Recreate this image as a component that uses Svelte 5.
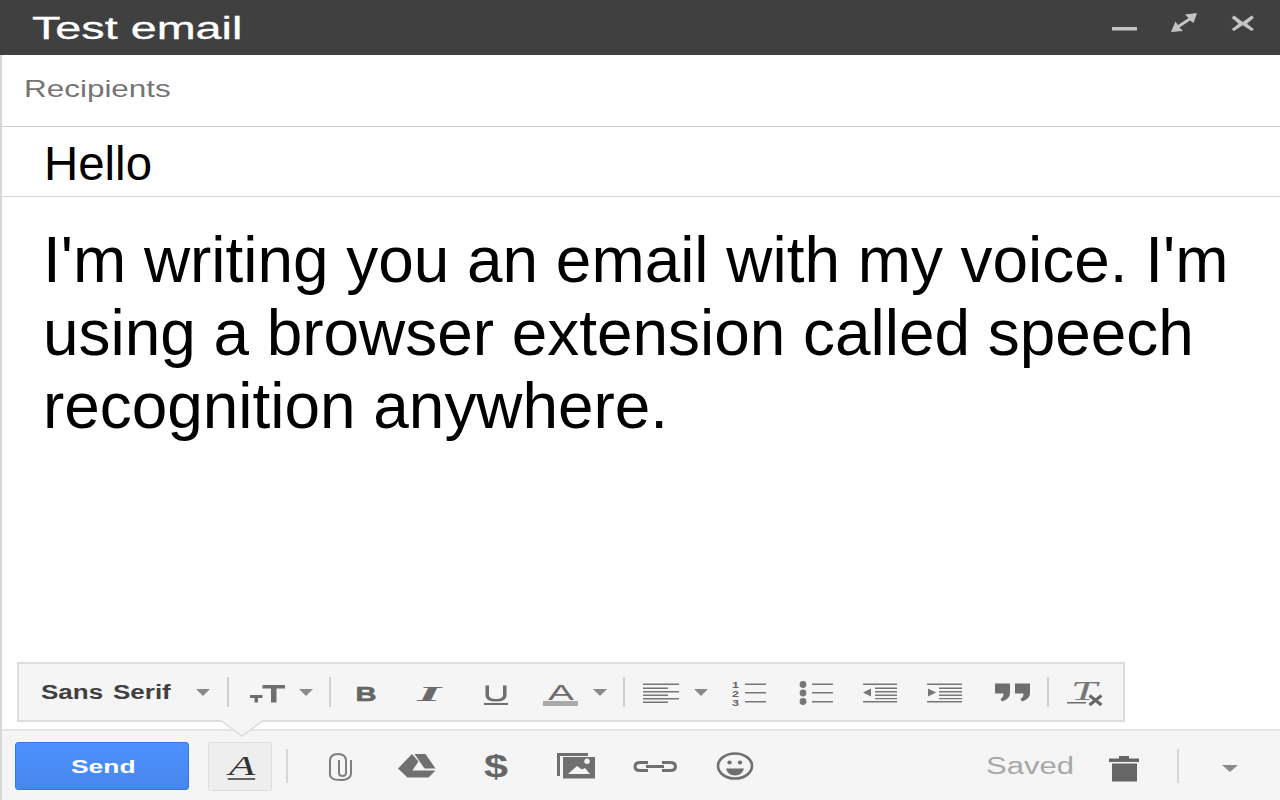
<script>
  let subject = 'Hello';
  let message = "I'm writing you an email with my voice. I'm using a browser extension called speech recognition anywhere.";
</script>

<div class="compose">
  <header class="titlebar">
    <span class="title">Test email</span>
    <div class="window-btns">
      <svg class="win-min" viewBox="1112 10 26 24"><rect x="1112" y="27" width="25" height="3.5" /></svg>
      <svg class="win-max" viewBox="1170 10 28 24">
        <path d="M1197 13L1185 14.500L1188.500 18L1178 25L1175.500 21.500L1171 32L1183 31L1179.500 27.500L1190 20.500L1193.500 23z" />
      </svg>
      <svg class="win-close" viewBox="1231 10 24 24">
        <path d="M1234 15.500l8.800 6.500 8.800-6.500 2.400 2.200-7 6 7 5.500-2.400 1.800-8.800-5.800-8.800 5.800-2.400-1.800 7-5.500-7-6z" />
      </svg>
    </div>
  </header>

  <div class="recipients"><span class="recipients-label">Recipients</span></div>
  <div class="subject">{subject}</div>
  <div class="message">{message}</div>

  <div class="format-bar">
    <span class="font-name">Sans Serif</span>
    <i class="arrow first"></i>
    <i class="sep sep-font"></i>
    <svg class="fi size" viewBox="251 680 32 24">
      <path d="M250 695h12.500v3h-4.500v4.500h-3.500v-4.500h-4.500z M262.500 685h22.500v3.500h-8.500v14h-5.500v-14h-8.500z" />
    </svg>
    <i class="arrow tight"></i>
    <i class="sep"></i>
    <svg class="fi bold" viewBox="350 680 32 24">
      <text class="t-bold heavy" x="355.500" y="701" font-size="21" textLength="21" lengthAdjust="spacingAndGlyphs">B</text>
    </svg>
    <svg class="fi italic" viewBox="414 680 32 24">
      <text class="t-italic" x="417" y="701" font-size="22" textLength="24" lengthAdjust="spacingAndGlyphs">I</text>
    </svg>
    <svg class="fi underline" viewBox="479 680 32 24">
      <path d="M484.500 685.500h3.500v9.500q0 4 7 4t7-4v-9.500h3.500v10q0 6-10.500 6t-10.500-6z" />
      <rect x="483" y="703" width="24" height="2" />
    </svg>
    <svg class="fi color" viewBox="544 680 32 24">
      <text class="t-reg" x="547" y="700" font-size="22" textLength="26" lengthAdjust="spacingAndGlyphs">A</text>
      <rect class="swatch" x="542" y="701" width="35" height="5" />
    </svg>
    <i class="arrow"></i>
    <i class="sep"></i>
    <svg class="fi align" viewBox="645 680 32 24">
      <path d="M643 683.500h36v1.500h-36z M643 687.500h25v1.500h-25z M643 691h36v1.500h-36z M643 694.500h25v1.500h-25z M643 698h36v1.500h-36z M643 701.500h25v1.500h-25z" />
    </svg>
    <i class="arrow"></i>
    <svg class="fi numbered" viewBox="732 680 32 24">
      <text class="t-bold" x="732" y="688" font-size="9" textLength="7" lengthAdjust="spacingAndGlyphs">1</text>
      <text class="t-bold" x="732" y="697" font-size="9" textLength="7" lengthAdjust="spacingAndGlyphs">2</text>
      <text class="t-bold" x="732" y="705.500" font-size="9" textLength="7" lengthAdjust="spacingAndGlyphs">3</text>
      <path d="M745 683.500h21v1.500h-21z M745 692h21v1.500h-21z M745 701h21v1.500h-21z" />
    </svg>
    <svg class="fi bullets" viewBox="800 680 32 24">
      <circle cx="803" cy="684.500" r="3.400" />
      <circle cx="803" cy="693" r="3.400" />
      <circle cx="803" cy="701.500" r="3.400" />
      <path d="M812 683.500h21v1.500h-21z M812 692h21v1.500h-21z M812 701h21v1.500h-21z" />
    </svg>
    <svg class="fi indent-less" viewBox="864 680 32 24">
      <path d="M863 683.500h34v1.500h-34z M863 701h34v1.500h-34z M875 687.500h22v1.500h-22z M875 691h22v1.500h-22z M875 694.500h22v1.500h-22z M875 698h22v1.200h-22z M871 688.500v8l-8-4z" />
    </svg>
    <svg class="fi indent-more" viewBox="928 680 32 24">
      <path d="M927 683.500h35v1.500h-35z M927 701h35v1.500h-35z M939 687.500h23v1.500h-23z M939 691h23v1.500h-23z M939 694.500h23v1.500h-23z M939 698h23v1.200h-23z M928 688.500v8l8-4z" />
    </svg>
    <svg class="fi quote" viewBox="996 680 32 24">
      <path d="M995 683.500h15v9.500q0 6-8 8.500l-1.500-2.500q3-1.500 3-5.500h-8.500z M1015 683.500h15v9.500q0 6-8 8.500l-1.500-2.500q3-1.500 3-5.500h-8.500z" />
    </svg>
    <i class="sep sep-clear"></i>
    <svg class="fi clear" viewBox="1069 680 32 24">
      <text class="t-serif" x="1072" y="700" font-size="28" textLength="26" lengthAdjust="spacingAndGlyphs">T</text>
      <rect x="1068" y="702" width="19" height="1.500" />
      <path class="x-mark" d="M1090.500 695.500l12 9.500 M1102.500 695.500l-12 9.500" />
    </svg>
    <svg class="notch" viewBox="0 0 46 18">
      <path d="M1 0l22 16 22-16z" />
      <path class="notch-line" d="M1 0l22 16 22-16" />
    </svg>
  </div>

  <div class="actions">
    <button class="send" type="button"><span>Send</span></button>
    <button class="text-format" type="button">
      <svg viewBox="208 742 63 48">
        <text class="t-serif-dark" x="228" y="775" font-size="28" textLength="27" lengthAdjust="spacingAndGlyphs">A</text>
        <rect class="dark" x="227" y="778" width="28" height="1.500" />
      </svg>
    </button>
    <i class="bar-sep first-sep"></i>

    <svg class="bi clip" viewBox="320 745 40 40">
      <path d="M351 759v13q0 7-11 7t-10-7v-12q0-7 8-7t8 7v12q0 3-3.500 3t-3.500-3v-13" />
    </svg>
    <svg class="bi drive" viewBox="396 745 40 40">
      <path d="M398 767.500l14-14.500 6.500 7.500-11 16z M414.500 753h11l10 14.500h-11z M412 769.500h23.500l-7 7h-21.500z" />
    </svg>
    <svg class="bi dollar" viewBox="476 745 40 40">
      <text class="t-bold" x="484" y="776" font-size="32" textLength="24" lengthAdjust="spacingAndGlyphs">$</text>
    </svg>
    <svg class="bi image" viewBox="556 745 40 40">
      <path d="M557 752h31v3h-28v20h-3z" />
      <path fill-rule="evenodd" d="M563 756h32v21.500h-32z M568 773l9-8 5 3.500 3-1.500 5 6z M587 757.500a2.800 2.800 0 1 0 .1 0z" />
    </svg>
    <svg class="bi link" viewBox="635 745 40 40">
      <path d="M648 761.500h-8q-5 0-5 4t5 4h8 M662 761.500h8q5.500 0 5.500 4t-5.500 4h-8 M646 765.500h18" />
    </svg>
    <svg class="bi smile" viewBox="714 745 40 40">
      <ellipse class="face" cx="735" cy="765" rx="17" ry="12.500" />
      <ellipse class="eye" cx="729.500" cy="761.500" rx="2.200" ry="2" />
      <ellipse class="eye" cx="740" cy="761.500" rx="2.200" ry="2" />
      <path class="eye" d="M726 767.500h18q-2 7-9 7t-9-7z" />
    </svg>

    <span class="saved"><span>Saved</span></span>
    <svg class="bi trash" viewBox="1105 745 40 40">
      <path d="M1110 757.500h10v-2.500h10v2.500h10v3.500h-30z M1113 762.500h25v18h-25z" />
    </svg>
    <i class="bar-sep last-sep"></i>
    <i class="arrow more"></i>
  </div>
</div>

<style>
  :global(body) {
    margin: 0;
    background: #fff;
    overflow: hidden;
  }

  .compose {
    display: flex;
    flex-direction: column;
    height: 800px;
    box-sizing: border-box;
    font-family: 'Liberation Sans', Arial, sans-serif;
    color: #000;
    border-left: 2px solid #d8d8d8;
  }

  .titlebar {
    display: flex;
    align-items: center;
    justify-content: space-between;
    flex: none;
    height: 55px;
    margin-left: -2px;
    background: #404040;
  }

  .title {
    display: block;
    width: 148px;
    margin-left: 32px;
    font-size: 32px;
    line-height: 58px;
    color: #fff;
    white-space: nowrap;
    transform: scaleX(1.46);
    transform-origin: left center;
    -webkit-text-stroke: 0.3px #fff;
  }

  .window-btns {
    display: flex;
    align-items: flex-start;
    height: 55px;
    padding-top: 10px;
    box-sizing: border-box;
    margin-right: 25px;
  }

  .window-btns svg {
    height: 24px;
    fill: #c4c4c4;
  }

  .win-min { width: 26px; }
  .win-max { width: 28px; margin-left: 32px; }
  .win-close { width: 24px; margin-left: 33px; }

  .recipients {
    flex: none;
    display: flex;
    align-items: center;
    height: 72px;
    padding: 0 0 3px 22px;
    box-sizing: border-box;
    border-bottom: 1px solid #cfcfcf;
  }

  .recipients-label {
    display: block;
    width: 112px;
    font-size: 24px;
    color: #757575;
    white-space: nowrap;
    transform: scaleX(1.31);
    transform-origin: left center;
  }

  .subject {
    flex: none;
    height: 69px;
    line-height: 74px;
    padding-left: 42px;
    font-size: 47.400px;
    border-bottom: 1px solid #d4d4d4;
  }

  .message {
    flex: 1;
    padding: 27px 30px 0 41px;
    font-size: 63.900px;
    line-height: 73px;
  }

  .format-bar {
    position: relative;
    display: flex;
    align-items: center;
    gap: 16px;
    flex: none;
    box-sizing: border-box;
    width: 1108px;
    height: 60px;
    margin: 0 0 7px 15px;
    padding-left: 22px;
    background: #f5f5f5;
    border: 2px solid #dcdcdc;
  }

  .font-name {
    display: block;
    flex: none;
    width: 100px;
    margin-right: 30px;
    font-size: 20px;
    font-weight: bold;
    color: #404040;
    white-space: nowrap;
    word-spacing: 2px;
    transform: scaleX(1.3);
    transform-origin: left center;
  }

  .arrow {
    display: block;
    flex: none;
    width: 0;
    height: 0;
    margin: 0 1px;
    border-left: 7px solid transparent;
    border-right: 7px solid transparent;
    border-top: 7px solid #8a8a8a;
  }

  .arrow.first { margin-left: 9px; }
  .arrow.tight { margin-left: 0; }

  .sep {
    display: block;
    flex: none;
    width: 2px;
    height: 30px;
    background: #cfcfcf;
    margin-left: -1px;
  }

  .sep-font { margin-left: 0; }
  .sep-clear { margin-left: 3px; }

  .fi {
    flex: none;
    width: 32px;
    height: 24px;
    overflow: visible;
    fill: #6e6e6e;
  }

  .size { margin-left: 6px; }
  .bold { margin-left: 3px; }
  .italic { margin-left: 16px; }
  .underline { margin-left: 18px; }
  .color { margin-left: 17px; margin-right: -1px; }
  .align { margin-left: 4px; }
  .numbered { margin-left: 7px; }
  .bullets { margin-left: 20px; }
  .indent-less { margin-left: 16px; }
  .indent-more { margin-left: 16px; }
  .quote { margin-left: 20px; }
  .clear { margin-left: 3px; }

  .align,
  .numbered path,
  .bullets,
  .indent-less,
  .indent-more {
    fill: #777;
  }

  .t-bold {
    font-family: 'Liberation Sans', sans-serif;
    font-weight: bold;
    fill: #666;
  }

  .heavy {
    stroke: #666;
    stroke-width: 0.6;
  }

  .t-italic {
    font-family: 'Liberation Serif', serif;
    font-style: italic;
    font-weight: bold;
    fill: #6a6a6a;
  }

  .t-reg {
    font-family: 'Liberation Sans', sans-serif;
    fill: #6e6e6e;
  }

  .t-serif {
    font-family: 'Liberation Serif', serif;
    font-style: italic;
    fill: #777;
  }

  .t-serif-dark {
    font-family: 'Liberation Serif', serif;
    font-style: italic;
    fill: #333;
  }

  .dark { fill: #333; }
  .swatch { fill: #aaa; }

  .x-mark {
    fill: none;
    stroke: #666;
    stroke-width: 3;
  }

  .notch {
    position: absolute;
    left: 200px;
    top: 56px;
    width: 46px;
    height: 18px;
    fill: #f5f5f5;
    z-index: 1;
  }

  .notch-line {
    fill: none;
    stroke: #dcdcdc;
    stroke-width: 1.500;
  }

  .actions {
    display: flex;
    align-items: center;
    flex: none;
    height: 71px;
    box-sizing: border-box;
    padding: 0 42px 0 13px;
    background: #f5f5f5;
    border-top: 2px solid #e4e4e4;
  }

  button {
    flex: none;
    padding: 0;
    font-family: inherit;
  }

  .send {
    width: 174px;
    height: 48px;
    margin-top: 1px;
    padding-top: 2px;
    color: #fff;
    text-align: left;
    background: linear-gradient(#4d90fe, #4787ed);
    border: 1px solid #3079ed;
    border-radius: 3px;
  }

  .send span {
    display: block;
    width: 47px;
    margin-left: 55px;
    font-size: 19px;
    font-weight: bold;
    transform: scaleX(1.39);
    transform-origin: left center;
  }

  .text-format {
    width: 64px;
    height: 49px;
    margin: 1px 0 0 19px;
    background: #eee;
    border: 1px solid #dcdcdc;
    border-radius: 3px;
  }

  .text-format svg {
    display: block;
    width: 100%;
    height: 100%;
    overflow: visible;
  }

  .bar-sep {
    display: block;
    flex: none;
    width: 2px;
    height: 34px;
    background: #d6d6d6;
  }

  .first-sep { margin-left: 14px; }
  .last-sep { margin-left: 33px; }

  .bi {
    flex: none;
    width: 40px;
    height: 40px;
    overflow: visible;
    fill: #707070;
  }

  .clip { margin-left: 32px; fill: none; stroke: #808080; stroke-width: 2; }
  .drive { margin-left: 36px; }
  .dollar { margin-left: 40px; }
  .image { margin-left: 40px; }
  .link { margin-left: 39px; fill: none; stroke: #707070; stroke-width: 3; }
  .smile { margin-left: 39px; }
  .face { fill: none; stroke: #707070; stroke-width: 2.600; }
  .eye { fill: #707070; }
  .trash { margin-left: 53px; fill: #666; }

  .saved {
    flex: none;
    display: block;
    width: 65px;
    margin-left: auto;
    margin-top: 2px;
    font-size: 23px;
    color: #a8a8a8;
    white-space: nowrap;
  }

  .saved span {
    display: block;
    transform: scaleX(1.35);
    transform-origin: left center;
  }

  .arrow.more {
    margin: 6px 0 0 43px;
    border-left-width: 8px;
    border-right-width: 8px;
  }
</style>
